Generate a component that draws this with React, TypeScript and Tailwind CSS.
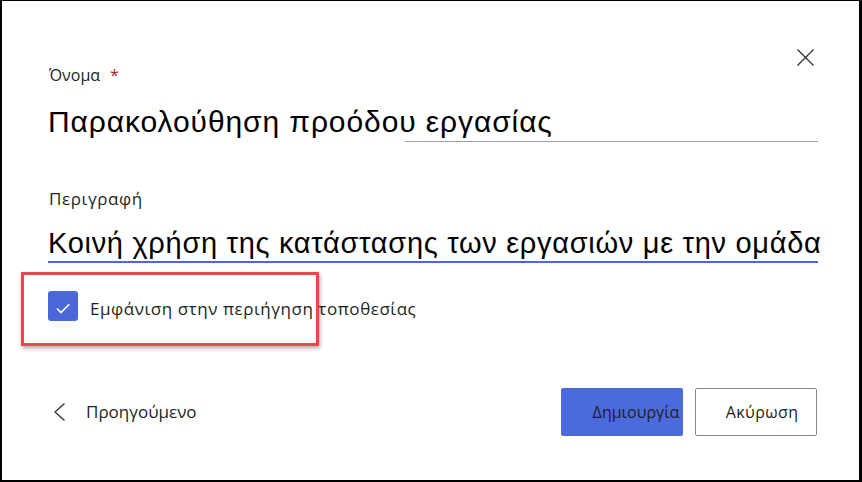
import { useState } from "react";

function App() {
  const [showInNav, setShowInNav] = useState(true);

  return (
    <div
      className="w-[862px] h-[482px] bg-white border-t border-l-2 border-b-2 border-r-[3px] border-black flex flex-col pl-[46px] pr-[41px] text-[#201f1e]"
      style={{ fontFamily: '"Open Sans", "Noto Sans", Arial, sans-serif' }}
    >
      {/* header: label + close */}
      <div className="flex justify-between items-start pt-[48px]">
        <label className="mt-[16px] text-[16px] leading-[20px] flex pl-[1px]">
          Όνομα
          <span className="ml-[10px] text-[#a4262c]">*</span>
        </label>
        <button className="mr-[4px] w-[17px] h-[17px] text-[#323130]">
          <svg viewBox="0 0 17 17" width="17" height="17" fill="none" stroke="currentColor" strokeWidth="1.3">
            <path d="M0.5 0.5 L16.5 16.5 M16.5 0.5 L0.5 16.5" />
          </svg>
        </button>
      </div>

      <div
        className="mt-[20px] text-[30px] leading-[34px] tracking-[0.9px] whitespace-nowrap text-black"
        style={{ fontFamily: '"Liberation Sans", Arial, sans-serif' }}
      >
        Παρακολούθηση προόδου εργασίας
      </div>
      <div className="mt-[2px] ml-[357px] h-px bg-[#a19f9d]" />

      <label className="mt-[47px] pl-[1px] text-[17px] leading-[20px] tracking-[0.6px]">Περιγραφή</label>
      <div
        className="mt-[17px] text-[29px] leading-[34px] tracking-[0.7px] whitespace-nowrap text-black"
        style={{ fontFamily: '"Liberation Sans", Arial, sans-serif' }}
      >
        Κοινή χρήση της κατάστασης των εργασιών με την ομάδα
      </div>
      <div className="mt-[1px] h-[2px] bg-[#4b69dc]" />

      {/* highlighted checkbox */}
      <div className="mt-[9px] -ml-[27px] w-[298px] h-[74px] border-[3px] border-[#e8474c] shadow-[1px_2px_4px_rgba(0,0,0,0.35)] flex items-start pt-[16px] pl-[24px]">
        <button
          onClick={() => setShowInNav(!showInNav)}
          className="w-[30px] h-[30px] shrink-0 rounded-[3px] bg-[#4b67d8] flex items-center justify-center"
        >
          {showInNav && (
            <svg viewBox="0 0 30 30" width="30" height="30" fill="none" stroke="white" strokeWidth="1.6">
              <path d="M9 17.5 L13 21.5 L21.3 13.3" />
            </svg>
          )}
        </button>
        <span className="ml-[12px] mt-[8px] text-[17px] leading-[20px] tracking-[0.55px] whitespace-nowrap">
          Εμφάνιση στην περιήγηση τοποθεσίας
        </span>
      </div>

      {/* footer */}
      <div className="mt-[42px] flex items-center justify-between">
        <button className="flex items-center">
          <svg viewBox="0 0 11 18" width="11" height="18" fill="none" stroke="#323130" strokeWidth="1.3" className="ml-[6px]">
            <path d="M10.5 0.5 L1 9 L10.5 17.5" />
          </svg>
          <span className="ml-[21px] text-[17px] leading-[20px]">Προηγούμενο</span>
        </button>
        <div className="flex gap-[12px] mr-[1px]">
          <button className="w-[122px] h-[48px] rounded-[2px] bg-[#4b6adb] text-[16px] pl-[28px] text-[#201f1e]">
            Δημιουργία
          </button>
          <button className="w-[122px] h-[48px] rounded-[2px] bg-white border border-[#8a8886] text-[16px] tracking-[0.4px] pl-[12px] text-[#201f1e]">
            Ακύρωση
          </button>
        </div>
      </div>
    </div>
  );
}

export default App;
